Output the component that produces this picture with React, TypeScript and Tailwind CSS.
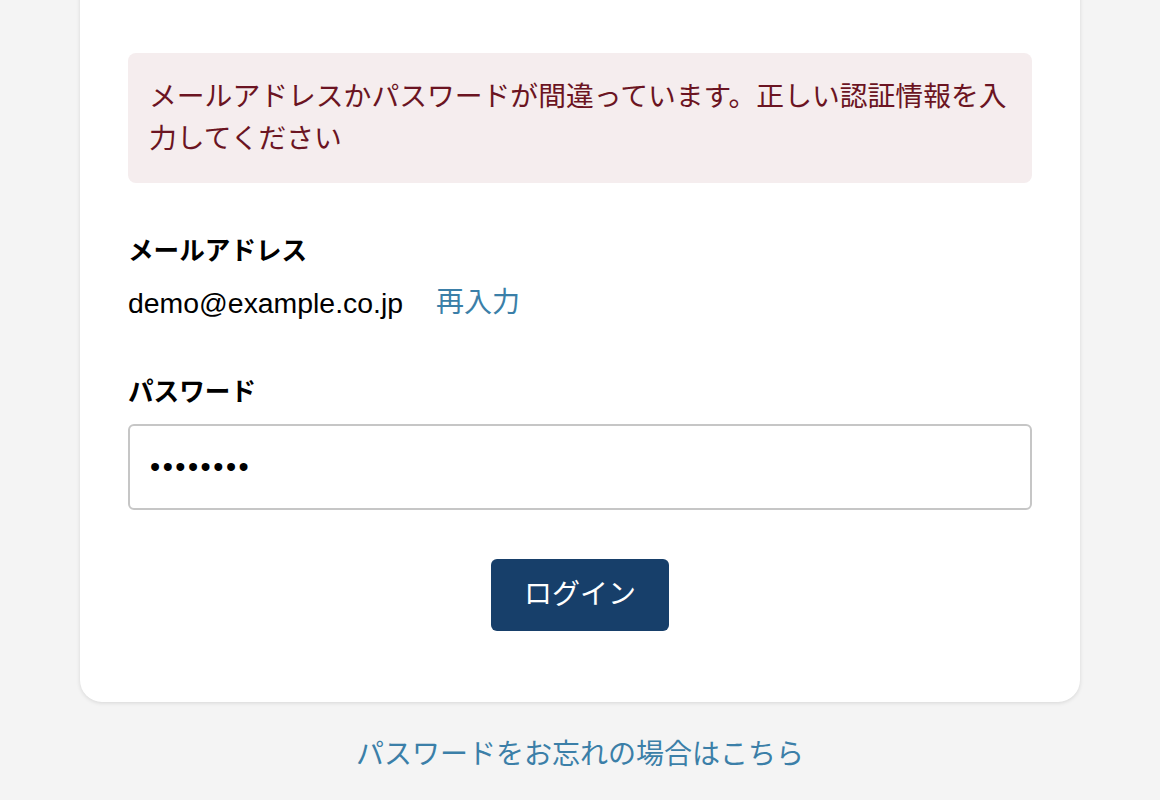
import React from 'react';

const font = { fontFamily: '"Liberation Sans", "Noto Sans CJK JP", sans-serif' };

function ErrorBox() {
  return (
    <div className="bg-[#f5edee] rounded-lg pl-[21px] pr-[12px] py-[23px] text-[27.8px] leading-[42px] text-[#6b1422]">
      メールアドレスかパスワードが間違っています。正しい認証情報を入力してください
    </div>
  );
}

function App() {
  return (
    <div className="min-h-screen bg-[#f4f4f4] text-black overflow-hidden" style={font}>
      <div className="w-[1000px] mx-auto -mt-[30px]">
        <div className="bg-white rounded-[22px] shadow-[0_1px_4px_rgba(0,0,0,0.12)] px-12 pt-[83px] pb-[71px]">
          <ErrorBox />

          <div className="mt-[50px]">
            <div className="text-[25.6px] leading-[36px] font-bold">メールアドレス</div>
            <div className="mt-[14px] flex items-center gap-[33px] leading-[40px]">
              <span className="text-[28.4px]">demo@example.co.jp</span>
              <a href="#" className="text-[28px] text-[#3b7fa8]">再入力</a>
            </div>
          </div>

          <div className="mt-[51px]">
            <div className="text-[25.6px] leading-[36px] font-bold">パスワード</div>
            <input
              type="password"
              defaultValue="password"
              className="mt-[14px] w-full h-[86px] border-2 border-[#c6c6c6] rounded-md px-[20px] text-[29px] tracking-[2.5px] outline-none"
            />
          </div>

          <div className="mt-[49px] flex justify-center">
            <button className="w-[178px] h-[72px] bg-[#173f6a] text-white text-[28px] rounded-md">
              ログイン
            </button>
          </div>
        </div>

        <div className="mt-[33px] text-center text-[28px] leading-[40px]">
          <a href="#" className="text-[#3b7fa8]">パスワードをお忘れの場合はこちら</a>
        </div>
      </div>
    </div>
  );
}

export default App;
